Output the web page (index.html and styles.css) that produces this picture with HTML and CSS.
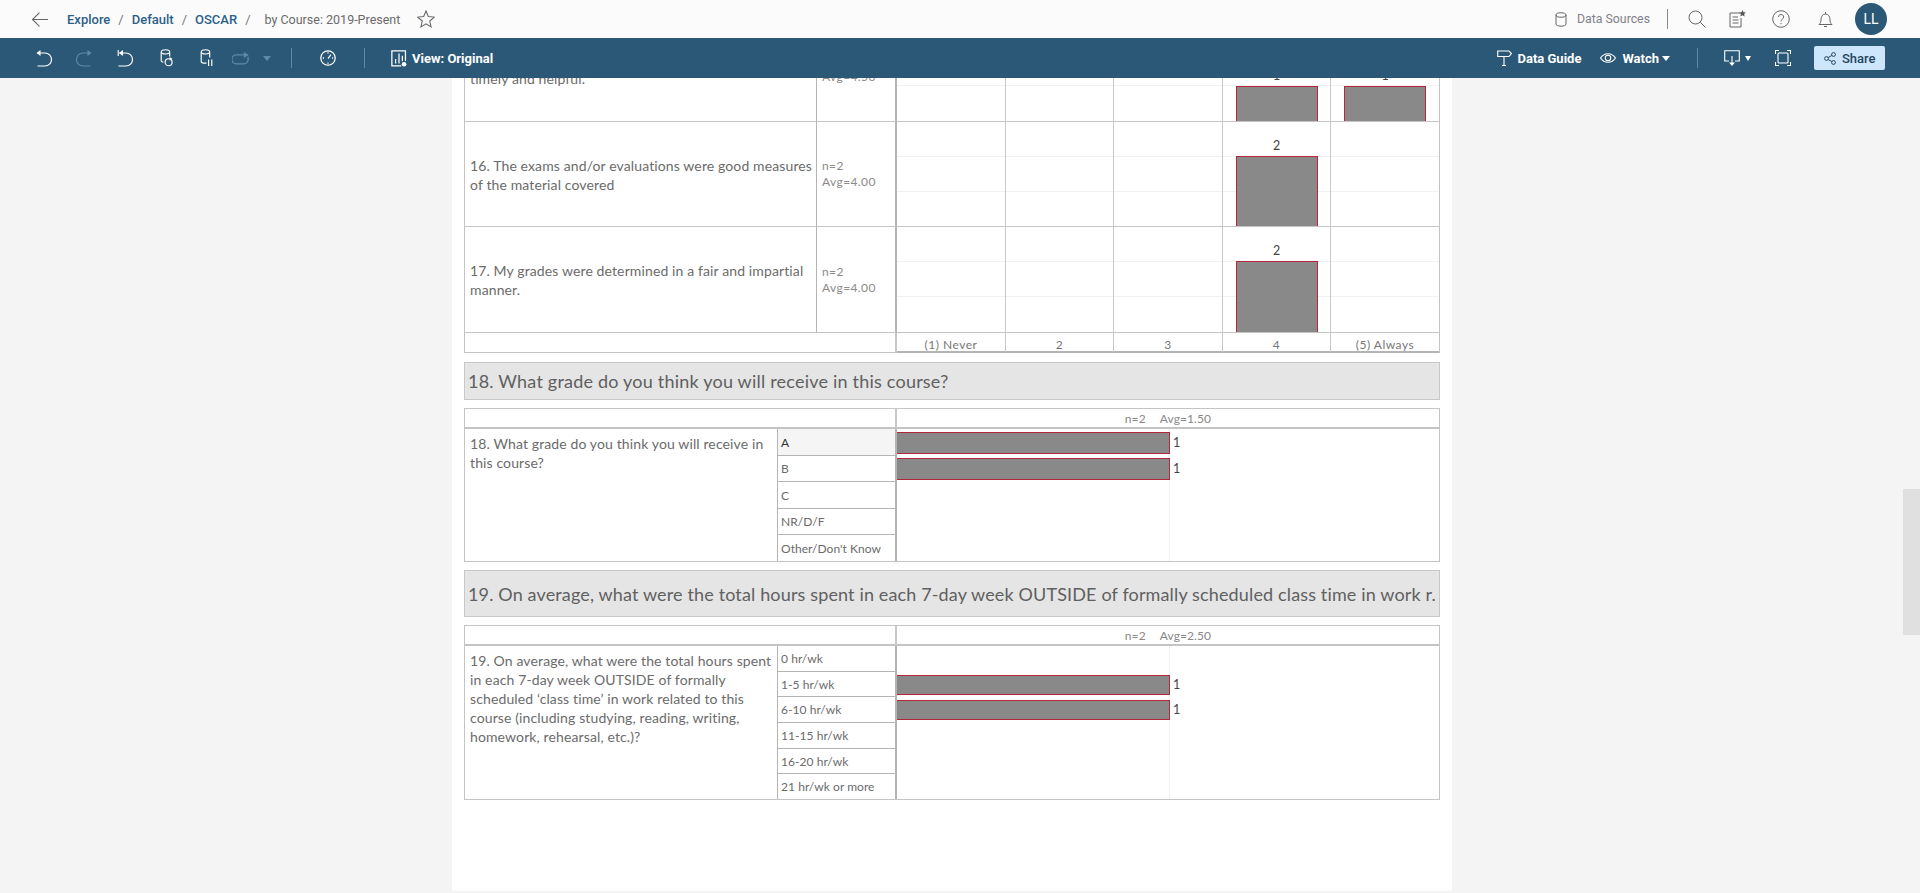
FILE: index.html
```html
<!DOCTYPE html>
<html lang="en">
<head>
    <meta charset="UTF-8">
    <title>by Course: 2019-Present</title>
    <link rel="stylesheet" href="styles.css">
</head>
<body>
    <header class="topbar">
        <svg class="back" width="18" height="15" viewBox="0 0 16 14"><path d="M15.5 7H1M7.5.5 1 7l6.5 6.5"/></svg>
        <nav class="crumbs">
            <a>Explore</a><span class="slash">/</span>
            <a>Default</a><span class="slash">/</span>
            <a>OSCAR</a><span class="slash">/</span>
            <span class="crumb-current">by Course: 2019-Present</span>
        </nav>
        <svg class="star" width="18" height="18" viewBox="0 0 17 17"><path d="M8.5 1l2.2 5.2 5.6.5-4.3 3.7 1.3 5.5-4.8-2.9-4.8 2.9 1.3-5.5L.7 6.7l5.6-.5z"/></svg>

        <div class="topbar-right">
            <svg class="line-icon" width="12" height="15" viewBox="0 0 12 15"><ellipse cx="6" cy="3" rx="5" ry="2.2"/><path d="M1 3v9c0 1.3 2.2 2.2 5 2.2s5-.9 5-2.2V3"/></svg>
            <span class="sources">Data Sources</span>
            <span class="top-sep"></span>
            <svg class="line-icon search" width="18" height="18" viewBox="0 0 18 18"><circle cx="7.5" cy="7.5" r="6.5"/><path d="M12.3 12.3 17.5 17.5"/></svg>
            <svg class="line-icon doc" width="17" height="18" viewBox="0 0 17 18"><path d="M11 3H1v14h11V8M3.500 7H9M3.500 10h6M3.500 13h6"/><path class="solid" d="M13.500 0l1 2.300 2.500.2-1.900 1.600.6 2.400-2.200-1.300-2.200 1.300.6-2.400L10 2.500l2.500-.2z"/></svg>
            <svg class="line-icon help" width="18" height="18" viewBox="0 0 18 18"><circle cx="9" cy="9" r="8.300"/><path d="M6.500 7c0-1.500 1.100-2.500 2.600-2.500S11.700 5.500 11.700 7c0 2-2.700 2-2.700 4.200"/><path d="M9 13v1.200"/></svg>
            <svg class="line-icon bell" width="15" height="17" viewBox="0 0 15 17"><path d="M1 13.500c1.500-1.300 2-2.500 2-5C3 5.500 4.800 3 7.500 3S12 5.500 12 8.500c0 2.500.5 3.700 2 5zM7.500 1v2M6 15.500h3"/></svg>
            <span class="avatar">LL</span>
        </div>
    </header>

    <div class="toolbar">
        <svg class="tool t-undo" width="16" height="17" viewBox="0 0 15 17"><path d="M1 3h7.500a5.500 5.500 0 0 1 0 13H1"/><path class="solid" d="M4 0v6L0 3z"/></svg>
        <svg class="tool dim t-redo" width="16" height="17" viewBox="0 0 15 17"><path d="M14 3H6.500a5.500 5.500 0 0 0 0 13H14"/><path class="solid" d="M11 0v6l4-3z"/></svg>
        <svg class="tool t-revert" width="16" height="17" viewBox="0 0 15 17"><path d="M.700 0v6M2 3h6.500a5.500 5.500 0 0 1 0 13H1"/><path class="solid" d="M5.500 0v6l-4-3z"/></svg>
        <svg class="tool t-data" width="13" height="18" viewBox="0 0 12 17"><ellipse cx="5" cy="2.700" rx="4" ry="2"/><path d="M1 3v8c0 .7.800 1.200 2 1.500M9 3v4"/><circle cx="8" cy="12.500" r="3.300"/><path class="solid" d="M9 7.500v3.500l2.500-1.700z"/></svg>
        <svg class="tool t-pause" width="13" height="18" viewBox="0 0 12 17"><ellipse cx="5" cy="2.700" rx="4" ry="2"/><path d="M1 3v9c0 .7.800 1.200 2 1.400H6M9 3v5M8 10v6M11 10v6"/></svg>
        <svg class="tool dim t-replay" width="18" height="13" viewBox="0 0 15 11"><path d="M11 2.500H3.500a3.500 3.500 0 0 0 0 7.500H10a3.500 3.500 0 0 0 3.500-3.500V4"/><path class="solid" d="M10 0v5l4-2.500z"/></svg>
        <span class="caret dim-caret t-replay-caret"></span>
        <span class="tool-sep sep-a"></span>
        <svg class="tool t-clock" width="16" height="16" viewBox="0 0 14 14"><circle cx="7" cy="7" r="6.300"/><path d="M7 7.500 9.500 4M2.500 7h1M10.500 7h1M7 2v1M7 11v1"/></svg>
        <span class="tool-sep sep-b"></span>
        <svg class="tool t-view" width="16" height="17" viewBox="0 0 14 15"><path d="M9 14H.700V.700h12v9"/><path d="M4 12V8M7 12V3M10 10V5"/><circle class="solid" cx="11.500" cy="12.500" r="2"/></svg>
        <span class="tool-label">View: Original</span>

        <div class="toolbar-right">
            <svg class="tool" width="15" height="16" viewBox="0 0 15 16"><path d="M.700 1H12l2.500 2.500L12 6.500H.700zM7 6.500V15.500M5 15.500h4"/></svg>
            <span class="tool-label guide">Data Guide</span>
            <svg class="tool t-eye" width="16" height="10" viewBox="0 0 16 10"><path d="M.500 5C2.500 2 5 .700 8 .700S13.500 2 15.500 5C13.500 8 11 9.300 8 9.300S2.500 8 .500 5z"/><circle cx="8" cy="5" r="2.700"/></svg>
            <span class="tool-label watch">Watch</span>
            <span class="caret"></span>
            <span class="tool-sep sep-c"></span>
            <svg class="tool t-screen" width="16" height="16" viewBox="0 0 16 16"><path d="M5 11H.700V.700h14.600V11H11M8 6v9"/><path class="solid" d="M5 12.500h6L8 16z"/></svg>
            <span class="caret caret-screen"></span>
            <svg class="tool t-full" width="16" height="16" viewBox="0 0 16 16"><path d="M.500 4V.500H4M12 .500h3.500V4M15.500 12v3.500H12M4 15.500H.500V12"/><rect x="3" y="3" width="10" height="10" rx="1"/></svg>
            <button class="share">
                <svg width="12" height="13" viewBox="0 0 12 13"><circle cx="2.500" cy="6.500" r="1.900"/><circle cx="9.500" cy="2.500" r="1.900"/><circle cx="9.500" cy="10.500" r="1.900"/><path d="M4.200 5.500 7.800 3.500M4.200 7.500l3.600 2"/></svg>
                Share
            </button>
        </div>
    </div>

    <main class="canvas">
        <div class="sheet">

            <section class="likert">
                <div class="q q-mid row-a">&nbsp;<br>timely and helpful.</div>
                <div class="stats row-a">&nbsp;<br>Avg=4.50</div>
                <div class="plot row-a"></div>
                <div class="plot row-a"></div>
                <div class="plot row-a"></div>
                <div class="plot row-a"><span class="count">1</span><span class="col-bar" style="height:35px"></span></div>
                <div class="plot row-a last"><span class="count">1</span><span class="col-bar" style="height:35px"></span></div>

                <div class="q q-mid">16. The exams and/or evaluations were good measures of the material covered</div>
                <div class="stats">n=2<br>Avg=4.00</div>
                <div class="plot"></div>
                <div class="plot"></div>
                <div class="plot"></div>
                <div class="plot"><span class="count">2</span><span class="col-bar" style="height:70px"></span></div>
                <div class="plot last"></div>

                <div class="q q-mid row-c">17. My grades were determined in a fair and impartial manner.</div>
                <div class="stats row-c">n=2<br>Avg=4.00</div>
                <div class="plot row-c"></div>
                <div class="plot row-c"></div>
                <div class="plot row-c"></div>
                <div class="plot row-c"><span class="count">2</span><span class="col-bar" style="height:71px"></span></div>
                <div class="plot row-c last"></div>

                <div class="axis-blank"></div>
                <div class="axis">(1) Never</div>
                <div class="axis">2</div>
                <div class="axis">3</div>
                <div class="axis">4</div>
                <div class="axis last">(5) Always</div>
            </section>

            <h2 class="title title-18">18. What grade do you think you will receive in this course?</h2>

            <section class="block">
                <div class="block-head">
                    <div class="head-blank"></div>
                    <div class="head-stats"><span>n=2</span><span>Avg=1.50</span></div>
                </div>
                <div class="block-body grade-rows">
                    <div class="q q-top">18. What grade do you think you will receive in this course?</div>
                    <div class="opt opt-on">A</div>
                    <div class="bar-cell"><span class="row-bar"></span><span class="count">1</span></div>
                    <div class="opt">B</div>
                    <div class="bar-cell"><span class="row-bar"></span><span class="count">1</span></div>
                    <div class="opt">C</div>
                    <div class="bar-cell"></div>
                    <div class="opt">NR/D/F</div>
                    <div class="bar-cell"></div>
                    <div class="opt opt-end">Other/Don't Know</div>
                    <div class="bar-cell"></div>
                </div>
            </section>

            <h2 class="title title-19">19. On average, what were the total hours spent in each 7-day week OUTSIDE of formally scheduled class time in work r.</h2>

            <section class="block">
                <div class="block-head">
                    <div class="head-blank"></div>
                    <div class="head-stats"><span>n=2</span><span>Avg=2.50</span></div>
                </div>
                <div class="block-body hours-rows">
                    <div class="q q-top">19. On average, what were the total hours spent in each 7-day week OUTSIDE of formally scheduled ‘class time’ in work related to this course (including studying, reading, writing, homework, rehearsal, etc.)?</div>
                    <div class="opt">0 hr/wk</div>
                    <div class="bar-cell"></div>
                    <div class="opt">1-5 hr/wk</div>
                    <div class="bar-cell"><span class="row-bar thin"></span><span class="count">1</span></div>
                    <div class="opt">6-10 hr/wk</div>
                    <div class="bar-cell"><span class="row-bar thin"></span><span class="count">1</span></div>
                    <div class="opt">11-15 hr/wk</div>
                    <div class="bar-cell"></div>
                    <div class="opt">16-20 hr/wk</div>
                    <div class="bar-cell"></div>
                    <div class="opt opt-end">21 hr/wk or more</div>
                    <div class="bar-cell"></div>
                </div>
            </section>

        </div>
        <div class="scroll-thumb"></div>
    </main>
</body>
</html>
```

FILE: styles.css
```css
* {
    box-sizing: border-box;
}

html, body {
    height: 100%;
}

body {
    margin: 0;
    display: flex;
    flex-direction: column;
    overflow: hidden;
    background-color: #f4f4f4;
    font-family: Lato, "Open Sans", sans-serif;
    color: #666;
}

svg {
    display: block;
    flex: none;
    fill: none;
}

/* top bar */
.topbar {
    flex: none;
    height: 38px;
    display: flex;
    align-items: center;
    padding-left: 31px;
    background-color: #fbfbfb;
    font-family: Roboto, sans-serif;
    font-size: 13px;
}

.back path {
    stroke: #666;
}

.crumbs {
    display: flex;
    align-items: center;
    margin-left: 18px;
}

.crumbs a {
    color: #2c5f88;
    font-weight: 500;
}

.slash {
    margin: 0 8px;
    color: #777;
}

.crumb-current {
    margin-left: 6px;
    font-size: 12.5px;
    color: #6a6a6a;
}

.star {
    margin-left: 17px;
}

.star path {
    stroke: #666;
}

.topbar-right {
    margin-left: auto;
    padding-right: 33px;
    display: flex;
    align-items: center;
}

.line-icon {
    stroke: #666;
}

.line-icon .solid {
    fill: #555;
    stroke: none;
}

.sources {
    margin-left: 10px;
    font-size: 12.3px;
    color: #80808a;
}

.top-sep {
    width: 1px;
    height: 20px;
    margin: 0 20px 0 17px;
    background-color: #888;
}

.doc {
    margin-left: 23px;
}

.help {
    margin-left: 26px;
}

.bell {
    margin-left: 28px;
}

.avatar {
    width: 32px;
    height: 32px;
    margin-left: 22px;
    border-radius: 50%;
    display: flex;
    align-items: center;
    justify-content: center;
    background-color: #2b5876;
    color: #fff;
    font-size: 14px;
}

/* dark toolbar */
.toolbar {
    flex: none;
    height: 40px;
    display: flex;
    align-items: center;
    padding-left: 36px;
    background-color: #2b5876;
    color: #fff;
    font-family: Roboto, sans-serif;
    font-size: 13px;
    position: relative;
    z-index: 2;
}

.tool {
    stroke: #fff;
    stroke-width: 1.1;
}

.tool .solid {
    fill: #fff;
    stroke: none;
}

.tool.dim {
    stroke: #5d8aa8;
}

.tool.dim .solid {
    fill: #5d8aa8;
}

.t-redo {
    margin-left: 24px;
}

.t-revert {
    margin-left: 25px;
}

.t-data {
    margin-left: 27px;
}

.t-pause {
    margin-left: 27px;
}

.t-replay {
    margin-left: 19px;
}

.t-replay-caret {
    margin-left: 13px;
}

.caret {
    width: 0;
    height: 0;
    border-left: 4px solid transparent;
    border-right: 4px solid transparent;
    border-top: 5px solid #fff;
}

.dim-caret {
    border-top-color: #5d8aa8;
}

.tool-sep {
    width: 1px;
    height: 20px;
    background-color: #5d8aa8;
}

.sep-a {
    margin-left: 20px;
}

.t-clock {
    margin-left: 28px;
}

.sep-b {
    margin-left: 28px;
}

.t-view {
    margin-left: 26px;
}

.tool-label {
    margin-left: 5px;
    font-weight: 700;
}

.toolbar-right {
    margin-left: auto;
    padding-right: 35px;
    display: flex;
    align-items: center;
}

.guide {
    margin-left: 6px;
}

.t-eye {
    margin-left: 19px;
}

.watch {
    margin-left: 6px;
    margin-right: 3px;
}

.sep-c {
    margin-left: 27px;
}

.t-screen {
    margin-left: 26px;
}

.caret-screen {
    margin-left: 5px;
    border-left-width: 3px;
    border-right-width: 3px;
}

.t-full {
    margin-left: 24px;
}

.share {
    width: 71px;
    height: 24px;
    margin-left: 23px;
    padding: 0 0 0 10px;
    display: flex;
    align-items: center;
    gap: 6px;
    border: 0;
    border-radius: 2px;
    background-color: #cde6fb;
    color: #23455f;
    font: 500 13px Roboto, sans-serif;
}

.share svg {
    stroke: #23455f;
}

/* dashboard */
.canvas {
    flex: 1;
    min-height: 0;
    position: relative;
    overflow: hidden;
}

.sheet {
    width: 1000px;
    height: 875px;
    margin: -62px 0 0 452px;
    padding: 0 12px;
    display: flex;
    flex-direction: column;
    background-color: #fff;
}

.scroll-thumb {
    position: absolute;
    right: 0;
    top: 411px;
    width: 17px;
    height: 146px;
    background-color: #e0e0e0;
}

.q {
    padding: 0 3px 0 5px;
    border-right: 1px solid #b4b4b4;
    font-size: 14px;
    line-height: 19px;
    letter-spacing: .12px;
    color: #6b6b6b;
}

.q-mid {
    padding-top: 1px;
    display: flex;
    align-items: center;
    border-bottom: 1px solid #c4c4c4;
}

.q-top {
    grid-row: 1 / -1;
    padding-top: 5px;
}

.likert {
    width: 976px;
    display: grid;
    grid-template-columns: 352px 80px 109px 108px 109px 108px 1fr;
    grid-template-rows: 106px 105px 106px 20px;
    border: 1px solid #c4c4c4;
    border-width: 0 1px;
}

.stats {
    padding-left: 5px;
    display: flex;
    align-items: center;
    border-right: 2px solid #b4b4b4;
    border-bottom: 1px solid #c4c4c4;
    font-size: 12px;
    line-height: 16px;
    letter-spacing: .4px;
    color: #8a8a8a;
}

.plot {
    display: flex;
    flex-direction: column;
    align-items: center;
    justify-content: flex-end;
    border-right: 1px solid #c8c8c8;
    border-bottom: 1px solid #c4c4c4;
    background:
        linear-gradient(#f1f1f1, #f1f1f1) 0 34px / 100% 1px no-repeat,
        linear-gradient(#f1f1f1, #f1f1f1) 0 69px / 100% 1px no-repeat;
}

.plot.last, .axis.last {
    border-right: 0;
}

.count {
    font-size: 12.5px;
    line-height: 16px;
    color: #444;
}

.plot .count {
    margin-bottom: 2px;
}

.col-bar {
    width: 82px;
    border: 1px solid #b5283c;
    border-bottom: 0;
    background-color: #898989;
}

.axis-blank {
    grid-column: 1 / 3;
    border-right: 2px solid #c8c8c8;
    border-bottom: 1px solid #c4c4c4;
}

.axis {
    border-right: 1px solid #c8c8c8;
    border-bottom: 2px solid #b4b4b4;
    text-align: center;
    font-size: 12px;
    line-height: 24px;
    letter-spacing: .5px;
    color: #777;
}

.title {
    width: 976px;
    margin: 9px 0 8px;
    padding-left: 3px;
    display: flex;
    align-items: center;
    white-space: nowrap;
    border: 1px solid #c8c8c8;
    background-color: #e5e5e5;
    font-size: 18px;
    font-weight: 400;
    color: #606060;
}

.title-18 {
    height: 38px;
    letter-spacing: .21px;
}

.title-19 {
    height: 47px;
    margin-top: 8px;
    letter-spacing: .14px;
}

.block {
    width: 976px;
    border: 1px solid #c4c4c4;
}

.block-head {
    height: 20px;
    display: grid;
    grid-template-columns: 432px 1fr;
    border-bottom: 2px solid #c4c4c4;
}

.head-blank {
    border-right: 2px solid #c8c8c8;
}

.head-stats {
    display: flex;
    justify-content: center;
    gap: 14px;
    font-size: 12px;
    line-height: 19px;
    letter-spacing: .1px;
    color: #888;
}

.block-body {
    display: grid;
    grid-template-columns: 313px 119px 1fr;
}

.grade-rows {
    grid-template-rows: 27px 26px 27px 26px 26px;
}

.hours-rows {
    grid-template-rows: 26px 25px 26px 26px 25px 25px;
}

.opt {
    padding-left: 3px;
    display: flex;
    align-items: center;
    border-right: 2px solid #b4b4b4;
    border-bottom: 1px solid #b4b4b4;
    font-size: 12px;
    letter-spacing: .05px;
    color: #6b6b6b;
}

.opt-on {
    background-color: #f5f5f5;
    color: #333;
}

.opt-end {
    border-bottom: 0;
}

.bar-cell {
    display: flex;
    align-items: center;
    gap: 3px;
    background: linear-gradient(#f1f1f1, #f1f1f1) 272px 0 / 1px 100% no-repeat;
}

.row-bar {
    width: 273px;
    height: 22px;
    border: 1px solid #b5283c;
    border-left: 0;
    background-color: #898989;
}

.row-bar.thin {
    height: 20px;
}
```
